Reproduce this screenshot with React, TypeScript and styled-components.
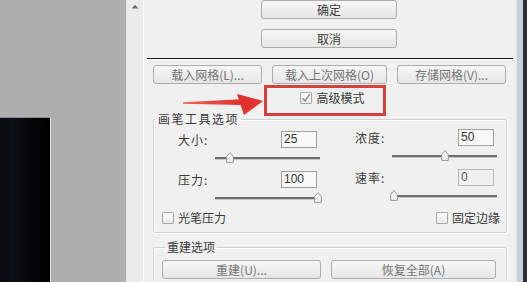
import React from "react";
import styled, { createGlobalStyle } from "styled-components";

const GlobalStyle = createGlobalStyle`
  html, body { margin: 0; padding: 0; overflow: hidden; background: #f0f0f0; }
  body { font-family: "Noto Sans CJK SC", "Noto Sans", sans-serif; }
  * { box-sizing: border-box; }
`;

const Screen = styled.div`
  display: flex;
  width: 527px;
  height: 282px;
  overflow: hidden;
`;

const Canvas = styled.div`
  width: 126px;
  flex-shrink: 0;
  background: #aeaeae;
  display: flex;
  flex-direction: column;
  justify-content: flex-end;
`;

const Photo = styled.div`
  width: 51px;
  height: 165px;
  border-right: 1px solid #e4e4e4;
  border-top: 1px solid #8a8a8a;
  background: linear-gradient(90deg, #06090d 0%, #0c1117 25%, #070a0e 50%, #020304 75%, #000000 100%);
`;

const ScrollStrip = styled.div`
  width: 18px;
  flex-shrink: 0;
  background: #ebebeb;
  border-right: 1px solid #fdfdfd;
  border-left: 1px solid #e2e2e2;
  display: flex;
  justify-content: center;
  padding-top: 4px;
`;

const Panel = styled.div`
  position: relative;
  width: 372px;
  flex-shrink: 0;
  background: #f0f0f0;
  display: flex;
  flex-direction: column;
  overflow: hidden;
`;

const RightEdge = styled.div`
  flex: 1;
  display: flex;
  border-left: 1px solid #e6e6e6;
`;

const EdgeLight = styled.div`
  width: 6px;
  background: #c9cfd6;
`;

const EdgeDark = styled.div`
  flex: 1;
  background: #2c3038;
`;

const TopButtons = styled.div`
  display: flex;
  flex-direction: column;
  align-items: center;
  gap: 10px;
  padding-right: 2px;
`;

const Button = styled.div<{ $w: number; $tone?: "dark" | "dim" }>`
  width: ${(p) => p.$w}px;
  height: 19px;
  border: 1px solid #acacac;
  border-radius: 3px;
  background: linear-gradient(#f7f7f7, #e6e6e6);
  display: flex;
  align-items: center;
  justify-content: center;
  font-size: 12px;
  line-height: 1;
  color: ${(p) => (p.$tone === "dim" ? "#747474" : "#3c3c3c")};
  white-space: nowrap;
`;

const Separator = styled.div`
  margin: 10px 3px 0 3px;
  height: 2px;
  border-top: 1px solid #1c1c1c;
  border-bottom: 1px solid #ffffff;
`;

const ButtonRow = styled.div`
  margin-top: 5px;
  padding-left: 9px;
  display: flex;
  gap: 10px;
`;

const CenterRow = styled.div`
  margin-top: 8px;
  display: flex;
  justify-content: center;
  padding-left: 5px;
`;

const CheckLabel = styled.div`
  display: flex;
  align-items: center;
  gap: 4px;
  height: 12px;
  font-size: 12px;
  line-height: 12px;
  color: #3a3a3a;
  white-space: nowrap;
`;

const Box = styled.span`
  width: 12px;
  height: 12px;
  border: 1px solid #a8a8a8;
  border-radius: 1px;
  background: linear-gradient(#fafafa, #e9e9e9);
  display: flex;
  align-items: center;
  justify-content: center;
`;

const Group = styled.fieldset<{ $top: number }>`
  margin: ${(p) => p.$top}px 9px 0 9px;
  padding: 0;
  min-width: 0;
  border: 1px solid #d2d2d2;
  border-radius: 2px;
  box-shadow: inset 1px 1px 0 #ffffff, 1px 1px 0 #ffffff;
`;

const Legend = styled.legend<{ $ml: number; $ls?: number }>`
  margin-left: ${(p) => p.$ml}px;
  padding: 0 2px;
  font-size: 12px;
  line-height: 14px;
  letter-spacing: ${(p) => p.$ls ?? 0}px;
  color: #3a3a3a;
`;

const BrushBody = styled.div`
  padding: 5px 6px 8px 8px;
  display: flex;
  flex-direction: column;
`;

const FieldGrid = styled.div`
  margin: 0 3px 0 16px;
  display: grid;
  grid-template-columns: 142px 142px;
  column-gap: 35px;
`;

const Column = styled.div<{ $lift?: boolean }>`
  display: flex;
  flex-direction: column;
  gap: 7px;
  margin-top: ${(p) => (p.$lift ? -2 : 0)}px;
`;

const Field = styled.div`
  display: flex;
  flex-direction: column;
`;

const FieldTop = styled.div`
  display: flex;
  align-items: center;
  justify-content: space-between;
  height: 17px;
  padding-right: 3px;
`;

const Label = styled.span`
  font-size: 12px;
  color: #3a3a3a;
  letter-spacing: 1px;
`;

const NumBox = styled.div<{ $off?: boolean }>`
  width: 36px;
  height: 17px;
  border: 1px solid ${(p) => (p.$off ? "#b8b8b8" : "#a0a0a0")};
  background: ${(p) => (p.$off ? "#f0f0f0" : "#f8f8f8")};
  font-family: "Liberation Sans", Arial, sans-serif;
  font-size: 12px;
  line-height: 15px;
  padding-left: 2px;
  color: ${(p) => (p.$off ? "#555" : "#333")};
`;

const SliderArea = styled.div`
  position: relative;
  margin: 4px 0 0 37px;
  height: 12px;
`;

const Track = styled.div`
  position: absolute;
  left: 0;
  right: 0;
  top: 5px;
  height: 3px;
  border-top: 2px solid #6e6e6e;
  border-bottom: 1px solid #c8c8c8;
`;

const Thumb = styled.svg`
  position: absolute;
  top: 0;
  width: 8px;
  height: 11px;
`;

const CheckRow = styled.div`
  margin-top: 8px;
  display: flex;
  justify-content: space-between;
`;

const RebuildBody = styled.div`
  padding: 6px 9px 12px 8px;
  display: flex;
  gap: 10px;
`;

const Highlight = styled.div`
  position: absolute;
  left: 120px;
  top: 85px;
  width: 122px;
  height: 31px;
  border: 3px solid #d5403d;
  pointer-events: none;
`;

const Arrow = styled.svg`
  position: absolute;
  left: 39px;
  top: 90px;
  width: 86px;
  height: 28px;
  pointer-events: none;
`;

const Check = () => (
  <svg width="10" height="10" viewBox="0 0 10 10">
    <path d="M1.5 5.2 L4 8 L8.8 1.2" fill="none" stroke="#8a8a8a" strokeWidth="1.4" />
  </svg>
);

const CheckItem = ({ text, checked }: { text: string; checked?: boolean }) => (
  <CheckLabel>
    <Box>{checked && <Check />}</Box>
    {text}
  </CheckLabel>
);

const Slider = ({ pos }: { pos: number }) => (
  <SliderArea>
    <Track />
    <Thumb viewBox="0 0 8 11" style={{ left: `calc(${pos * 100}% - 4px)` }}>
      <path d="M4 0.6 L7.3 4.5 L7.3 10.4 L0.7 10.4 L0.7 4.5 Z" fill="#f4f4f4" stroke="#8c8c8c" strokeWidth="0.9" />
    </Thumb>
  </SliderArea>
);

type FieldProps = { label: string; value: string; pos: number; off?: boolean };

const SliderField = ({ label, value, pos, off }: FieldProps) => (
  <Field>
    <FieldTop>
      <Label>{label}</Label>
      <NumBox $off={off}>{value}</NumBox>
    </FieldTop>
    <Slider pos={pos} />
  </Field>
);

export default function App() {
  return (
    <>
      <GlobalStyle />
      <Screen>
        <Canvas>
          <Photo />
        </Canvas>
        <ScrollStrip>
          <svg width="8" height="5" viewBox="0 0 8 5">
            <path d="M0.5 4.5 L4 0.8 L7.5 4.5 Z" fill="#6e6e6e" />
          </svg>
        </ScrollStrip>
        <Panel>
          <TopButtons>
            <Button $w={136}>确定</Button>
            <Button $w={136}>取消</Button>
          </TopButtons>
          <Separator />
          <ButtonRow>
            <Button $w={109} $tone="dim">载入网格(L)...</Button>
            <Button $w={115} $tone="dim">载入上次网格(O)</Button>
            <Button $w={109} $tone="dim">存储网格(V)...</Button>
          </ButtonRow>
          <CenterRow>
            <CheckItem text="高级模式" checked />
          </CenterRow>
          <Group $top={8}>
            <Legend $ml={2} $ls={1.5}>画笔工具选项</Legend>
            <BrushBody>
              <FieldGrid>
                <Column>
                  <SliderField label="大小:" value="25" pos={0.14} />
                  <SliderField label="压力:" value="100" pos={0.98} />
                </Column>
                <Column $lift>
                  <SliderField label="浓度:" value="50" pos={0.5} />
                  <SliderField label="速率:" value="0" pos={0.02} off />
                </Column>
              </FieldGrid>
              <CheckRow>
                <CheckItem text="光笔压力" />
                <CheckItem text="固定边缘" />
              </CheckRow>
            </BrushBody>
          </Group>
          <Group $top={7}>
            <Legend $ml={11}>重建选项</Legend>
            <RebuildBody>
              <Button $w={159} $tone="dim">重建(U)...</Button>
              <Button $w={165} $tone="dim">恢复全部(A)</Button>
            </RebuildBody>
          </Group>
          <Highlight />
          <Arrow viewBox="0 0 86 28">
            <defs>
              <linearGradient id="ag" x1="0" x2="1" y1="0" y2="0">
                <stop offset="0" stopColor="#f06058" />
                <stop offset="1" stopColor="#e2302c" />
              </linearGradient>
            </defs>
            <path d="M0 12.2 L58 9.2 L58 15 L0 13.8 Z" fill="url(#ag)" />
            <path d="M54 4 L80 11 L61 25 Z" fill="#e2302c" />
          </Arrow>
        </Panel>
        <RightEdge>
          <EdgeLight />
          <EdgeDark />
        </RightEdge>
      </Screen>
    </>
  );
}
